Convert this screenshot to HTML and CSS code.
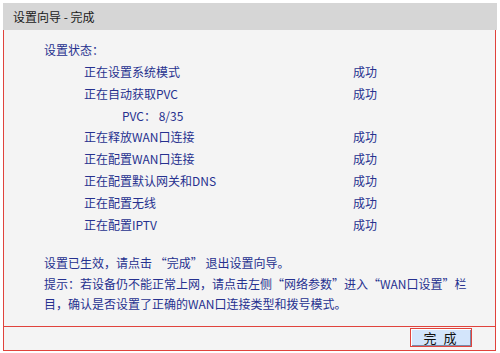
FILE: index.html
```html
<!DOCTYPE html>
<html lang="zh-CN">
<head>
<meta charset="utf-8">
<title>设置向导 - 完成</title>
<link rel="stylesheet" href="styles.css">
</head>
<body>
<div class="wizard">
  <div class="title">设置向导 - 完成</div>
  <div class="content">
    <div class="section-head">设置状态：</div>
    <div class="status-list">
      <div class="row"><span class="label">正在设置系统模式</span><span class="result">成功</span></div>
      <div class="row"><span class="label">正在自动获取PVC</span><span class="result">成功</span></div>
      <div class="row"><span class="label sub">PVC： 8/35</span><span class="result"></span></div>
      <div class="row"><span class="label">正在释放WAN口连接</span><span class="result">成功</span></div>
      <div class="row"><span class="label">正在配置WAN口连接</span><span class="result">成功</span></div>
      <div class="row"><span class="label">正在配置默认网关和DNS</span><span class="result">成功</span></div>
      <div class="row"><span class="label">正在配置无线</span><span class="result">成功</span></div>
      <div class="row"><span class="label">正在配置IPTV</span><span class="result">成功</span></div>
    </div>
    <p class="note">设置已生效，请点击 “完成” 退出设置向导。</p>
    <p class="tip">提示：若设备仍不能正常上网，请点击左侧“网络参数”进入“WAN口设置”栏<br>目，确认是否设置了正确的WAN口连接类型和拨号模式。</p>
  </div>
  <div class="actions">
    <button class="btn" type="button">完 成</button>
  </div>
</div>
</body>
</html>
```

FILE: styles.css
```css
html, body {
  margin: 0;
  padding: 0;
  background: #ffffff;
}
body {
  font-family: "Noto Sans CJK SC", "Liberation Sans", sans-serif;
  font-size: 12px;
  color: #26318f;
}
.wizard {
  display: flex;
  flex-direction: column;
  padding: 3px 3px 0 3px;
  width: 494px;
}
.title {
  height: 27px;
  line-height: 27px;
  background: #d6d6d6;
  color: #1a1a1a;
  font-size: 12px;
  padding-left: 10px;
  width: 484px;
}
.content {
  background: #f4f4f4;
  border-left: 1px solid #e0433c;
  border-right: 1px solid #e0433c;
  border-bottom: 1px solid #e0433c;
  padding: 9px 0 11px 40px;
  height: 276px;
  width: 451px;
  display: flex;
  flex-direction: column;
}
.section-head {
  height: 21.85px;
  line-height: 21.85px;
}
.status-list {
  display: flex;
  flex-direction: column;
  padding-left: 40px;
}
.row {
  display: grid;
  grid-template-columns: 269px auto;
  height: 21.85px;
  line-height: 21.85px;
}
.label.sub {
  padding-left: 38px;
}
.note {
  margin: 17px 0 0 0;
  line-height: 20px;
}
.tip {
  margin: 1px 0 0 0;
  line-height: 20px;
}
.actions {
  display: flex;
  justify-content: flex-end;
  align-items: flex-start;
  background: #f4f4f4;
  border-left: 1px solid #e0433c;
  border-right: 1px solid #e0433c;
  border-bottom: 1px solid #e0433c;
  height: 22px;
  padding: 1px 23px 0 0;
  width: 468px;
}
.btn {
  width: 62px;
  height: 19px;
  margin: 0;
  padding: 0;
  border: 1px solid #e0433c;
  box-shadow: inset 1px 1px 0 #ffffff, inset -1px -1px 0 #7a8aa8;
  background: #d3e5fb;
  color: #111111;
  font-family: "Noto Sans CJK SC", "Liberation Sans", sans-serif;
  font-size: 13px;
  line-height: 17px;
  letter-spacing: 2px;
}
```
